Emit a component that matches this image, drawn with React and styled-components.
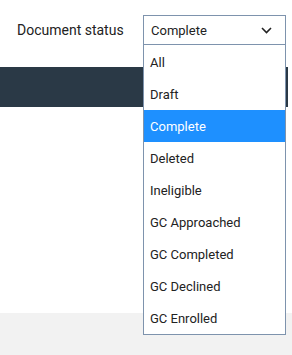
import React from "react";
import styled, { createGlobalStyle } from "styled-components";

const Global = createGlobalStyle`
  html, body { margin: 0; padding: 0; background: #fff; }
  body { font-family: Roboto, "Noto Sans", sans-serif; color: #222; }
`;

const Page = styled.div`
  width: 292px;
  height: 355px;
  display: flex;
  flex-direction: column;
  position: relative;
  overflow: hidden;
`;

const FilterRow = styled.div`
  display: grid;
  grid-template-columns: 126px 143px;
  align-items: center;
  height: 30px;
  margin-top: 15px;
  padding-left: 17px;
`;

const Label = styled.span`
  font-size: 14px;
  color: #222;
`;

const SelectWrap = styled.div`
  position: relative;
  width: 143px;
`;

const SelectBox = styled.div`
  box-sizing: border-box;
  height: 30px;
  border: 1px solid #7e93ad;
  display: flex;
  align-items: center;
  justify-content: space-between;
  padding: 0 13px 0 7px;
  font-size: 13px;
  color: #222;
  background: #fff;
`;

const List = styled.ul`
  position: absolute;
  top: 30px;
  left: 0;
  width: 143px;
  box-sizing: border-box;
  margin: 0;
  padding: 0;
  list-style: none;
  background: #fff;
  border: 1px solid #7e93ad;
  border-top: none;
  z-index: 2;
`;

const Option = styled.li`
  height: 32px;
  display: flex;
  align-items: center;
  padding-left: 6px;
  font-size: 13px;
  color: ${(p) => (p.$active ? "#fff" : "#222")};
  background: ${(p) => (p.$active ? "#1e90ff" : "#fff")};
  &:first-child { height: 33px; padding-top: 1px; box-sizing: border-box; }
`;

const DarkBar = styled.div`
  height: 40px;
  margin-top: 22px;
  width: 288px;
  background: #2a3946;
`;

const Content = styled.div`
  flex: 1;
  background: #fff;
`;

const Footer = styled.div`
  height: 42px;
  background: #f2f2f2;
`;

const options = [
  "All",
  "Draft",
  "Complete",
  "Deleted",
  "Ineligible",
  "GC Approached",
  "GC Completed",
  "GC Declined",
  "GC Enrolled",
];

export default function App() {
  return (
    <>
      <Global />
      <Page>
        <FilterRow>
          <Label>Document status</Label>
          <SelectWrap>
            <SelectBox>
              <span>Complete</span>
              <svg width="11" height="7" viewBox="0 0 11 7">
                <path d="M1 1l4.5 4.5L10 1" fill="none" stroke="#222" strokeWidth="1.6" />
              </svg>
            </SelectBox>
            <List>
              {options.map((o) => (
                <Option key={o} $active={o === "Complete"}>
                  {o}
                </Option>
              ))}
            </List>
          </SelectWrap>
        </FilterRow>
        <DarkBar />
        <Content />
        <Footer />
      </Page>
    </>
  );
}
